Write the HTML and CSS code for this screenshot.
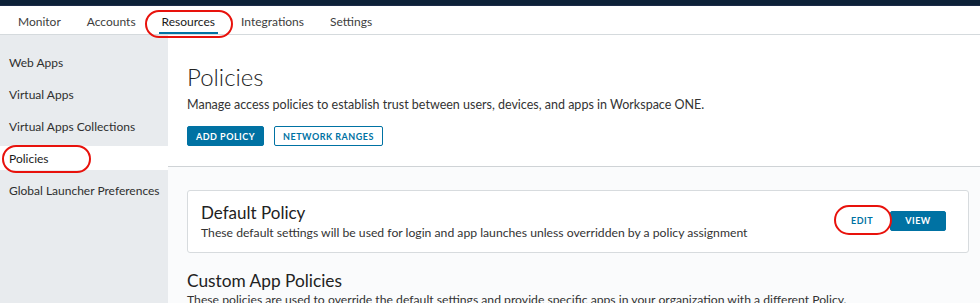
FILE: index.html
```html
<!DOCTYPE html>
<html>
<head>
<meta charset="utf-8">
<link rel="stylesheet" href="styles.css">
</head>
<body>
<div class="topbar"></div>
<nav class="tabs">
  <a class="tab">Monitor</a>
  <a class="tab">Accounts</a>
  <a class="tab active">Resources</a>
  <a class="tab">Integrations</a>
  <a class="tab">Settings</a>
</nav>
<div class="layout">
  <aside class="sidebar">
    <a class="side-item">Web Apps</a>
    <a class="side-item">Virtual Apps</a>
    <a class="side-item">Virtual Apps Collections</a>
    <a class="side-item active">Policies</a>
    <a class="side-item">Global Launcher Preferences</a>
  </aside>
  <main class="main">
    <section class="header">
      <h1 class="title">Policies</h1>
      <p class="desc">Manage access policies to establish trust between users, devices, and apps in Workspace ONE.</p>
      <div class="actions">
        <button class="btn btn-primary btn-add">ADD POLICY</button>
        <button class="btn btn-outline">NETWORK RANGES</button>
      </div>
    </section>
    <section class="content">
      <div class="card">
        <div class="card-text">
          <h2 class="card-title">Default Policy</h2>
          <p class="card-desc">These default settings will be used for login and app launches unless overridden by a policy assignment</p>
        </div>
        <div class="card-actions">
          <button class="btn btn-flat">EDIT</button>
          <button class="btn btn-primary btn-view">VIEW</button>
        </div>
      </div>
      <h2 class="section-title">Custom App Policies</h2>
      <p class="section-desc">These policies are used to override the default settings and provide specific apps in your organization with a different Policy.</p>
    </section>
  </main>
</div>
<div class="mark mark-resources"></div>
<div class="mark mark-policies"></div>
<div class="mark mark-edit"></div>
</body>
</html>
```
FILE: styles.css
```css
* { box-sizing: border-box; }
html, body { margin: 0; padding: 0; }
body {
  font-family: "Lato", "Open Sans", sans-serif;
  color: #313131;
  width: 980px;
  height: 303px;
  overflow: hidden;
  position: relative;
  background: #fafbfc;
}
.topbar { height: 6px; background: #0d2138; border-bottom: 1px solid #1c2b48; }
.tabs {
  height: 29px;
  display: flex;
  align-items: stretch;
  gap: 26px;
  padding-left: 18px;
  background: #fff;
  border-bottom: 1px solid #d5dadd;
}
.tab {
  font-size: 12px;
  color: #3d3d3d;
  display: flex;
  align-items: center;
  padding-top: 2px;
  position: relative;
}
.tab.active { color: #1a1a1a; }
.tab.active::after {
  content: "";
  position: absolute;
  left: -3px; right: -3px; bottom: 0;
  height: 2px;
  background: #0072a3;
}
.layout { display: flex; height: 268px; }
.sidebar {
  width: 168px;
  flex: none;
  background: #e8ebee;
  padding-top: 15px;
  display: flex;
  flex-direction: column;
  gap: 8px;
}
.side-item {
  height: 24px;
  flex: none;
  display: flex;
  align-items: center;
  padding-left: 9px;
  font-size: 12px;
  color: #2f2f2f;
}
.side-item.active { background: #fff; color: #1a1a1a; }
.main { flex: 1; display: flex; flex-direction: column; }
.header {
  flex: none;
  background: #fff;
  padding: 27px 19px 0;
  height: 132px;
  border-bottom: 1px solid #cfd3d6;
}
.title {
  margin: 0;
  font-size: 24px;
  font-weight: 300;
  line-height: 30px;
  color: #222;
}
.desc { margin: 5px 0 0; font-size: 12.5px; line-height: 16px; color: #333; }
.actions { display: flex; gap: 10px; margin-top: 13px; }
.btn {
  font-family: inherit;
  font-size: 9px;
  font-weight: 700;
  letter-spacing: 0.5px;
  height: 20px;
  padding: 0;
  white-space: nowrap;
  text-align: center;
  border-radius: 2px;
  cursor: pointer;
}
.btn-primary { background: #0072a3; border: 1px solid #0072a3; color: #fff; }
.btn-outline { background: #fff; border: 1px solid #0072a3; color: #0072a3; width: 109px; }
.btn-add { width: 77px; }
.content { flex: none; padding: 23px 11px 0 19px; }
.card {
  background: #fff;
  border: 1px solid #d7dbde;
  border-radius: 3px;
  height: 63px;
  display: flex;
  align-items: center;
  justify-content: space-between;
  padding: 0 22px 0 13px;
}
.card-title { margin: 0; font-size: 17px; font-weight: 400; line-height: 20px; color: #222; }
.card-desc { margin: 1px 0 0; font-size: 12.2px; line-height: 17px; color: #333; }
.card-actions { display: flex; align-items: center; margin-bottom: 2px; }
.btn-flat { background: transparent; border: 1px solid transparent; color: #0072a3; width: 50px; margin-right: 3px; }
.btn-view { width: 56px; }
.section-title { margin: 17px 0 0; font-size: 17.3px; font-weight: 400; line-height: 22px; color: #222; }
.section-desc { margin: 0; font-size: 12.2px; line-height: 16px; color: #333; }
.mark {
  position: absolute;
  border: 2px solid #e8120c;
  border-radius: 14px;
}
.mark-resources { left: 145px; top: 10px; width: 88px; height: 28px; }
.mark-policies { left: 2px; top: 145px; width: 89px; height: 28px; }
.mark-edit { left: 834px; top: 205px; width: 58px; height: 30px; border-radius: 15px; }
```
